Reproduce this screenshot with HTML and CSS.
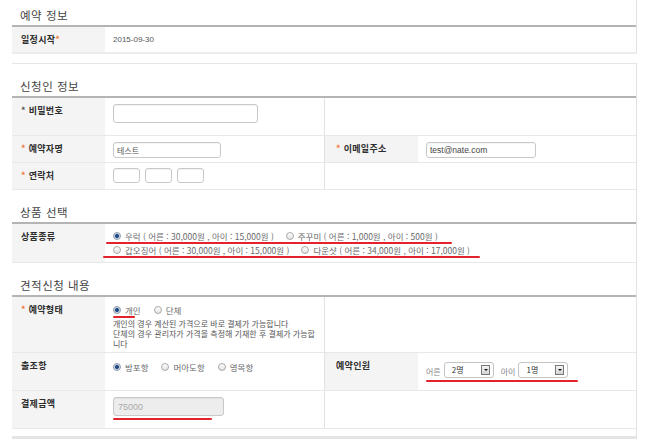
FILE: index.html
```html
<!DOCTYPE html>
<html lang="ko">
<head>
<meta charset="utf-8">
<title>예약</title>
<link rel="stylesheet" href="styles.css">
</head>
<body>
<div class="page">
  <section class="box box-first">
    <h2 class="title">예약 정보</h2>
    <div class="row row-date">
      <div class="label">일정시작<span class="req">*</span></div>
      <div class="value wide date">2015-09-30</div>
    </div>
  </section>

  <div class="box box-main">
    <section>
      <h2 class="title">신청인 정보</h2>
      <div class="row h38">
        <div class="label"><span class="req dark">*</span> 비밀번호</div>
        <div class="value"><input class="inp inp-pw" type="password"></div>
        <div class="rest"></div>
      </div>
      <div class="row h27">
        <div class="label"><span class="req">*</span> 예약자명</div>
        <div class="value"><input class="inp inp-name" type="text" value="테스트"></div>
        <div class="label label2"><span class="req">*</span> 이메일주소</div>
        <div class="value"><input class="inp inp-mail" type="text" value="test@nate.com"></div>
      </div>
      <div class="row h27">
        <div class="label"><span class="req">*</span> 연락처</div>
        <div class="value phones">
          <input class="inp inp-tel" type="text">
          <input class="inp inp-tel" type="text">
          <input class="inp inp-tel" type="text">
        </div>
        <div class="rest"></div>
      </div>
    </section>

    <section>
      <h2 class="title">상품 선택</h2>
      <div class="row h39">
        <div class="label">상품종류</div>
        <div class="value wide">
          <div class="line">
            <label class="opt"><input class="rd" type="radio" name="p" checked>우럭 ( 어른 : 30,000원 , 아이 : 15,000원 )</label>
            <label class="opt"><input class="rd" type="radio" name="p">주꾸미 ( 어른 : 1,000원 , 아이 : 500원 )</label>
          </div>
          <div class="line">
            <label class="opt"><input class="rd" type="radio" name="p">갑오징어 ( 어른 : 30,000원 , 아이 : 15,000원 )</label>
            <label class="opt"><input class="rd" type="radio" name="p">다운샷 ( 어른 : 34,000원 , 아이 : 17,000원 )</label>
          </div>
          <span class="mark mark-p1"></span>
          <span class="mark mark-p2"></span>
        </div>
      </div>
    </section>

    <section>
      <h2 class="title">견적신청 내용</h2>
      <div class="row h56">
        <div class="label"><span class="req">*</span> 예약형태</div>
        <div class="value">
          <div class="line line-type">
            <label class="opt opt-s"><input class="rd" type="radio" name="t" checked>개인</label>
            <label class="opt opt-s"><input class="rd" type="radio" name="t">단체</label>
          </div>
          <p class="desc">개인의 경우 계산된 가격으로 바로 결제가 가능합니다<br>단체의 경우 관리자가 가격을 측정해 기재한 후 결제가 가능합니다</p>
          <span class="mark mark-type"></span>
        </div>
        <div class="rest"></div>
      </div>
      <div class="row h38">
        <div class="label">출조항</div>
        <div class="value">
          <div class="line line-port">
            <label class="opt opt-s"><input class="rd" type="radio" name="h" checked>방포항</label>
            <label class="opt opt-s"><input class="rd" type="radio" name="h">머아도항</label>
            <label class="opt opt-s"><input class="rd" type="radio" name="h">영목항</label>
          </div>
        </div>
        <div class="label label2">예약인원</div>
        <div class="value people">
          <span class="plabel">어른</span>
          <span class="sel"><span class="sel-txt">2명</span><span class="sel-btn"></span></span>
          <span class="plabel">아이</span>
          <span class="sel"><span class="sel-txt">1명</span><span class="sel-btn"></span></span>
          <span class="mark mark-people"></span>
        </div>
      </div>
      <div class="row h38">
        <div class="label">결제금액</div>
        <div class="value">
          <input class="inp inp-pay" type="text" value="75000" readonly>
          <span class="mark mark-pay"></span>
        </div>
        <div class="rest"></div>
      </div>
    </section>
  </div>
</div>
</body>
</html>
```

FILE: styles.css
```css
* {
  box-sizing: border-box;
  margin: 0;
  padding: 0;
}

html,
body {
  background: #fff;
}

body {
  font-family: "Noto Sans CJK KR", "Noto Sans", sans-serif;
  font-size: 8.5px;
  color: #333;
}

.page {
  margin-top: -8px;
  margin-left: 12px;
  width: 625px;
}

.box {
  border-top: 1px solid #e6e6e6;
  border-right: 1px solid #e2e2e2;
}

.box-first {
  border-bottom: 2px solid #ececec;
  margin-bottom: 9px;
}

.box-main {
  padding-bottom: 7px;
  border-bottom: 3px solid #e5e5e5;
}

.title {
  height: 34px;
  padding: 15px 0 0 8px;
  font-size: 11.5px;
  line-height: 14px;
  font-weight: normal;
  letter-spacing: 0.5px;
  color: #444;
  border-bottom: 2px solid #b4b4b4;
}

.row {
  display: grid;
  grid-template-columns: 93px 219px 94px 1fr;
  border-bottom: 1px solid #e8e8e8;
}

.row-date {
  height: 25px;
  border-bottom: 0;
}

.h38 { height: 38px; }
.h27 { height: 27px; }
.h39 { height: 39px; }
.h56 { height: 56px; }

.label {
  background: #f4f4f4;
  padding: 6px 0 0 9px;
  font-size: 9px;
  line-height: 13px;
  font-weight: bold;
  color: #2e2e2e;
  letter-spacing: 0.3px;
}

.label2 {
  border-left: 1px solid #e2e2e2;
  padding-left: 11px;
}

.rest {
  grid-column: 3 / 5;
  border-left: 1px solid #e2e2e2;
}

.wide {
  grid-column: 2 / 5;
}

.value {
  position: relative;
  padding: 5px 0 0 8px;
}

.date {
  padding-top: 6px;
  font-family: "Liberation Sans", sans-serif;
  font-size: 8px;
  line-height: 13px;
  color: #555;
}

.req {
  color: #f27a3a;
}

.req.dark {
  color: #555;
}

/* inputs */
.inp {
  display: block;
  border: 1px solid #c9c9c9;
  border-radius: 3px;
  background: #fff;
  box-shadow: inset 0 1px 1px rgba(0, 0, 0, 0.05);
  font-family: "Noto Sans CJK KR", sans-serif;
  font-size: 8px;
  color: #555;
  padding: 0 3px;
  outline: none;
}

.inp-pw {
  width: 145px;
  height: 19px;
  margin-top: 1px;
}

.inp-name {
  width: 108px;
  height: 16px;
  margin-top: 1px;
}

.inp-mail {
  width: 110px;
  height: 16px;
  margin-top: 1px;
  font-family: "Liberation Sans", sans-serif;
  font-size: 8.5px;
  color: #444;
}

.phones {
  display: flex;
  gap: 5px;
}

.inp-tel {
  width: 27px;
  height: 15px;
}

.inp-pay {
  width: 111px;
  height: 19px;
  margin-top: 1px;
  background: #ededed;
  color: #aaa;
  font-family: "Liberation Sans", sans-serif;
  font-size: 9px;
  padding-left: 4px;
}

/* radios */
.line {
  display: flex;
  align-items: center;
  height: 14px;
}

.line-type {
  height: 16px;
}

.line-port {
  margin-top: 2px;
}

.opt {
  display: flex;
  align-items: center;
  font-size: 8.5px;
  color: #6a6a6a;
  margin-right: 12px;
  white-space: nowrap;
}

.opt-s {
  margin-right: 13px;
}

.rd {
  appearance: none;
  -webkit-appearance: none;
  flex: none;
  width: 8px;
  height: 8px;
  border: 1px solid #a9a9a9;
  border-radius: 50%;
  background: linear-gradient(#ffffff, #e2e2e2);
  margin: 0 4px 0 0;
}

.rd:checked {
  border-color: #8c9aab;
  background: radial-gradient(circle, #234c86 0, #234c86 1.6px, #c9d4e2 2.3px, #f2f2f2 100%);
}

.desc {
  font-size: 8px;
  line-height: 10px;
  color: #555;
  width: 206px;
  margin-top: 1px;
}

/* people select */
.people {
  display: flex;
  align-items: center;
  height: 100%;
  padding-top: 0;
  padding-bottom: 4px;
}

.plabel {
  font-size: 8px;
  color: #888;
  margin-right: 3px;
  padding-top: 3px;
}

.sel {
  display: flex;
  align-items: center;
  width: 50px;
  height: 16px;
  border: 1px solid #c4c4c4;
  border-radius: 3px;
  background: #fff;
  padding: 0 3px 0 7px;
  margin-right: 7px;
}

.sel-txt {
  flex: 1;
  font-size: 8px;
  color: #333;
}

.sel-btn {
  position: relative;
  width: 9px;
  height: 10px;
  border: 1px solid #777;
  background: linear-gradient(#f4f4f4, #d4d4d4);
}

.sel-btn::after {
  content: "";
  position: absolute;
  left: 2px;
  top: 3px;
  border-left: 2px solid transparent;
  border-right: 2px solid transparent;
  border-top: 2px solid #111;
}

/* red annotation marks */
.mark {
  position: absolute;
  height: 2px;
  background: #e3222b;
  border-radius: 1px;
}

.mark-p1 { left: 1px; top: 18px; width: 346px; }
.mark-p2 { left: -2px; top: 32px; width: 377px; }
.mark-type { left: 8px; top: 19px; width: 22px; }
.mark-people { left: 8px; top: 27px; width: 152px; }
.mark-pay { left: 8px; top: 27px; width: 99px; }
```
